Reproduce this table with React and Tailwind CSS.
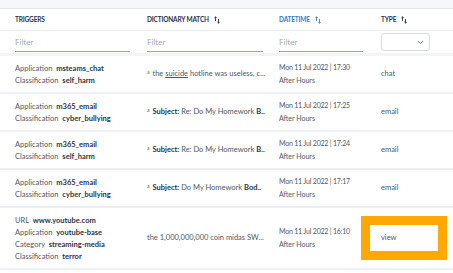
import { ChevronDown } from 'lucide-react';

const rows = [
    {
        triggers: [
            ['Application', 'msteams_chat'],
            ['Classification', 'self_harm'],
        ],
        match: (
            <>
                <sup className="text-[5px] mr-[3px]">a</sup>the <span className="underline">suicide</span> hotline was useless, c...
            </>
        ),
        time: '17:30',
        type: 'chat',
    },
    {
        triggers: [
            ['Application', 'm365_email'],
            ['Classification', 'cyber_bullying'],
        ],
        match: (
            <>
                <sup className="text-[5px] mr-[3px]">a</sup>
                <b className="font-bold text-[#2b3445]">Subject:</b> Re: Do My Homework <b className="font-bold text-[#2b3445]">B..</b>
            </>
        ),
        time: '17:25',
        type: 'email',
    },
    {
        triggers: [
            ['Application', 'm365_email'],
            ['Classification', 'self_harm'],
        ],
        match: (
            <>
                <sup className="text-[5px] mr-[3px]">a</sup>
                <b className="font-bold text-[#2b3445]">Subject:</b> Re: Do My Homework <b className="font-bold text-[#2b3445]">B..</b>
            </>
        ),
        time: '17:24',
        type: 'email',
    },
    {
        triggers: [
            ['Application', 'm365_email'],
            ['Classification', 'cyber_bullying'],
        ],
        match: (
            <>
                <sup className="text-[5px] mr-[3px]">a</sup>
                <b className="font-bold text-[#2b3445]">Subject:</b> Do My Homework <b className="font-bold text-[#2b3445]">Bod..</b>
            </>
        ),
        time: '17:17',
        type: 'email',
    },
    {
        triggers: [
            ['URL', 'www.youtube.com'],
            ['Application', 'youtube-base'],
            ['Category', 'streaming-media'],
            ['Classification', 'terror'],
        ],
        match: <>the 1,000,000,000 coin midas SW...</>,
        time: '16:10',
        type: 'view',
    },
];

function SortIcon() {
    return (
        <svg className="w-[6px] h-[8px] ml-[5px]" viewBox="0 0 6 8" fill="none" stroke="currentColor" strokeWidth="0.9">
            <path d="M1.5 5V0.8M0.4 1.9L1.5 0.8L2.6 1.9" />
            <path d="M4.5 3V7.2M3.4 6.1L4.5 7.2L5.6 6.1" />
        </svg>
    );
}

export default function App() {
    return (
        <div className="w-[453px] h-[273px] overflow-hidden bg-white font-['Lato',sans-serif] text-[#4f5765]">
            <div className="h-[9px] bg-[#f5f7fa] border-b border-[#e4e8ee]" />
            <div className="grid grid-cols-[140px_132px_102px_1fr] h-[22px] items-center border-b border-[#e8ecf1] text-[6.5px] font-bold uppercase text-[#2b3445] tracking-tight">
                <div className="pl-[15px]">Triggers</div>
                <div className="pl-[7px] flex items-center">
                    Dictionary Match <SortIcon />
                </div>
                <div className="pl-[7px] flex items-center text-[#3a78d6]">
                    Datetime <SortIcon />
                </div>
                <div className="pl-[7px] flex items-center">
                    Type <SortIcon />
                </div>
            </div>
            <div className="grid grid-cols-[140px_132px_102px_1fr] h-[22px] items-center text-[8px] text-[#a4abb6]">
                <div className="pl-[15px] pr-[10px]">
                    <div className="border-b border-[#9aa3af] pb-[3px] pt-[4px]">Filter</div>
                </div>
                <div className="pl-[7px] pr-[9px]">
                    <div className="border-b border-[#9aa3af] pb-[3px] pt-[4px]">Filter</div>
                </div>
                <div className="pl-[7px] pr-[11px]">
                    <div className="border-b border-[#9aa3af] pb-[3px] pt-[4px]">Filter</div>
                </div>
                <div className="pl-[7px]">
                    <div className="w-[49px] h-[18px] border border-[#d6dce4] rounded-[3px] flex items-center justify-end pr-[4px]">
                        <ChevronDown className="w-[9px] h-[9px] text-[#5b6472]" strokeWidth={2.5} />
                    </div>
                </div>
            </div>
            <div className="h-[3px] bg-[#f2f4f7]" />
            {rows.map((row, i) => (
                <div
                    key={i}
                    className={`grid grid-cols-[140px_132px_102px_1fr] items-center border-b-2 border-[#eceff3] text-[7.5px] ${
                        row.triggers.length > 2 ? 'h-[62px]' : 'h-[38px]'
                    }`}
                >
                    <div className="pl-[15px] flex flex-col gap-[3px]">
                        {row.triggers.map(([label, value]) => (
                            <div key={label} className="leading-[9px] whitespace-nowrap">
                                {label} <span className="font-bold text-[#2b3445] ml-[2px]">{value}</span>
                            </div>
                        ))}
                    </div>
                    <div className="pl-[7px] whitespace-nowrap overflow-hidden">{row.match}</div>
                    <div className="pl-[7px] flex flex-col gap-[4px] leading-[9px] whitespace-nowrap text-[7px]">
                        <div className="tracking-[-0.2px]">Mon 11 Jul 2022 | {row.time}</div>
                        <div>After Hours</div>
                    </div>
                    <div className="pl-[7px]">
                        {row.type === 'view' ? (
                            <div className="-ml-[20px] w-[86px] h-[44px] border-[9px] border-[#ffa800] bg-white flex items-center pl-[11px]">
                                view
                            </div>
                        ) : (
                            row.type
                        )}
                    </div>
                </div>
            ))}
        </div>
    );
}
